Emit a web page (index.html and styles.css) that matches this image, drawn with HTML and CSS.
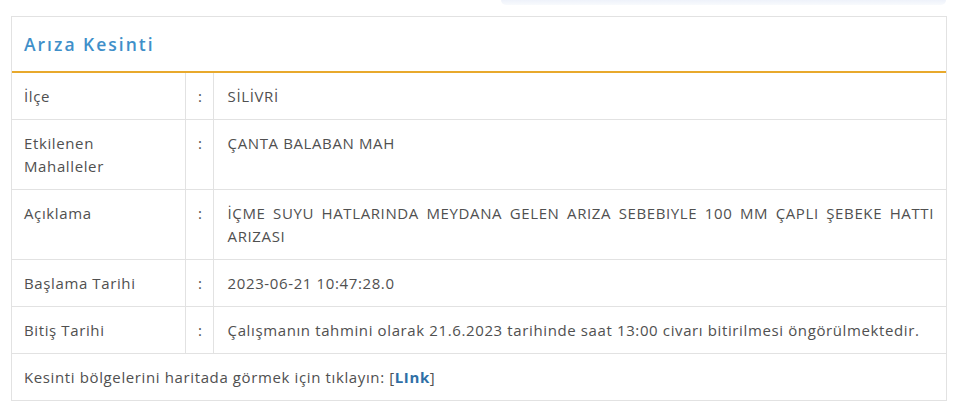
FILE: index.html
```html
<!DOCTYPE html>
<html lang="tr">
<head>
<meta charset="utf-8">
<title>Arıza Kesinti</title>
<link rel="stylesheet" href="styles.css">
</head>
<body>
<div class="page">
  <div class="top-shadow"></div>
  <div class="panel">
    <div class="panel-head"><h2 class="panel-title">Arıza Kesinti</h2></div>
    <table class="info">
      <tr>
        <td class="lbl">İlçe</td>
        <td class="sep">:</td>
        <td class="val">SİLİVRİ</td>
      </tr>
      <tr>
        <td class="lbl">Etkilenen<br>Mahalleler</td>
        <td class="sep">:</td>
        <td class="val">ÇANTA BALABAN MAH</td>
      </tr>
      <tr>
        <td class="lbl">Açıklama</td>
        <td class="sep">:</td>
        <td class="val">İÇME SUYU HATLARINDA MEYDANA GELEN ARIZA SEBEBIYLE 100 MM ÇAPLI ŞEBEKE HATTI ARIZASI</td>
      </tr>
      <tr>
        <td class="lbl">Başlama Tarihi</td>
        <td class="sep">:</td>
        <td class="val">2023-06-21 10:47:28.0</td>
      </tr>
      <tr>
        <td class="lbl">Bitiş Tarihi</td>
        <td class="sep">:</td>
        <td class="val">Çalışmanın tahmini olarak 21.6.2023 tarihinde saat 13:00 civarı bitirilmesi öngörülmektedir.</td>
      </tr>
      <tr>
        <td class="full" colspan="3">Kesinti bölgelerini haritada görmek için tıklayın: [<a class="link" href="#">LInk</a>]</td>
      </tr>
    </table>
  </div>
</div>
</body>
</html>
```

FILE: styles.css
```css
html, body {
  margin: 0;
  padding: 0;
  background: #ffffff;
}

body {
  font-family: "Open Sans", "Noto Sans", sans-serif;
  font-size: 15px;
  letter-spacing: 0.62px;
  color: #505050;
}

.page {
  padding: 0 13px 0 11px;
}

.top-shadow {
  width: 445px;
  height: 5px;
  margin-left: auto;
  margin-right: 1px;
  border-radius: 0 0 8px 8px;
  background: linear-gradient(#eef2fa, #f8fafd);
}

.panel {
  margin-top: 11px;
  border: 1px solid #e2e2e2;
  border-bottom: none;
}

.panel-head {
  height: 54px;
  display: flex;
  align-items: center;
  padding: 0 12px;
  border-bottom: 2px solid #e8a92c;
}

.panel-title {
  margin: 0;
  font-size: 17.5px;
  font-weight: 600;
  letter-spacing: 2px;
  color: #3f8fc9;
  line-height: 24px;
}

.info {
  width: 100%;
  border-collapse: collapse;
}

.info td {
  padding: 12px 12px 11px;
  line-height: 23px;
  vertical-align: top;
  border-bottom: 1px solid #e2e2e2;
}

.info .lbl {
  width: 149px;
  border-right: 1px solid #e2e2e2;
}

.info .sep {
  width: 2px;
  padding-left: 12px;
  padding-right: 10px;
  border-right: 1px solid #e2e2e2;
}

.info .val {
  text-align: justify;
  padding-left: 14px;
}

.info .full {
  padding-left: 12px;
}

.link {
  color: #2f6fa6;
  font-weight: 700;
  text-decoration: none;
}
```
